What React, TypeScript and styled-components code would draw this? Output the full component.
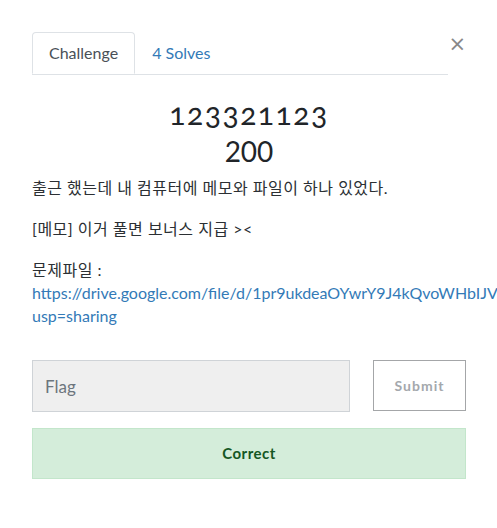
import React from "react";
import styled, { createGlobalStyle } from "styled-components";

const GlobalStyle = createGlobalStyle`
  body {
    margin: 0;
    background: #ffffff;
    font-family: Lato, "Noto Sans CJK KR", sans-serif;
    color: #212529;
    overflow: hidden;
  }
`;

export default function App() {
  return (
    <>
      <GlobalStyle />
      <Modal>
        <Header>
          <Tabs>
            <Tab active>Challenge</Tab>
            <Tab>4 Solves</Tab>
          </Tabs>
          <Close>×</Close>
        </Header>
        <Title>123321123</Title>
        <Points>200</Points>
        <Description>
          <p>출근 했는데 내 컴퓨터에 메모와 파일이 하나 있었다.</p>
          <p>[메모] 이거 풀면 보너스 지급 &gt;&lt;</p>
          <p>
            문제파일 :
            <br />
            <Link>https://drive.google.com/file/d/1pr9ukdeaOYwrY9J4kQvoWHbIJV/view?</Link>
            <br />
            <Link>usp=sharing</Link>
          </p>
        </Description>
        <SubmitRow>
          <FlagInput placeholder="Flag" />
          <SubmitButton>Submit</SubmitButton>
        </SubmitRow>
        <Notice>Correct</Notice>
      </Modal>
    </>
  );
}

const Modal = styled.div`
  padding: 32px 31px 0 32px;
  width: 434px;
`;

const Header = styled.div`
  display: flex;
  align-items: flex-start;
`;

const Tabs = styled.div`
  display: flex;
  width: 420px;
  border-bottom: 1px solid #dee2e6;
`;

const Tab = styled.div<{ active?: boolean }>`
  padding: 0 16px;
  height: 40px;
  line-height: 40px;
  font-size: 16px;
  margin-bottom: ${(p) => (p.active ? "-1px" : "0")};
  color: ${(p) => (p.active ? "#495057" : "#337ab7")};
  background: ${(p) => (p.active ? "#ffffff" : "transparent")};
  border: 1px solid ${(p) => (p.active ? "#dee2e6" : "transparent")};
  border-bottom-color: ${(p) => (p.active ? "#ffffff" : "transparent")};
  border-radius: 4px 4px 0 0;
`;

const Close = styled.div`
  margin-left: auto;
  margin-top: 1px;
  font-size: 21px;
  line-height: 22px;
  color: #888888;
  font-family: "DejaVu Sans", sans-serif;
`;

const Title = styled.h3`
  margin: 21px 0 0;
  text-align: center;
  font-weight: 400;
  font-size: 30px;
  line-height: 35px;
  letter-spacing: 1.5px;
  font-variant-numeric: oldstyle-nums;
  color: #212529;
`;

const Points = styled.h4`
  margin: 3px 0 0;
  text-align: center;
  font-weight: 400;
  font-size: 28px;
  line-height: 34px;
  color: #212529;
`;

const Description = styled.div`
  margin-top: 8px;
  font-size: 16px;
  line-height: 23px;
  letter-spacing: 0.5px;
  white-space: nowrap;
  color: #2b2f33;

  p {
    margin: 0 0 18px;
  }
`;

const Link = styled.span`
  color: #337ab7;
  font-size: 16px;
  letter-spacing: 0;
`;

const SubmitRow = styled.div`
  display: flex;
  align-items: flex-start;
  gap: 23px;
  margin-top: 33px;
`;

const FlagInput = styled.input`
  box-sizing: border-box;
  width: 318px;
  height: 52px;
  padding: 0 12px;
  font-family: Lato, sans-serif;
  font-size: 17px;
  background: #efefef;
  border: 1px solid #cfd3d7;
  outline: none;

  &::placeholder {
    color: #6c757d;
  }
`;

const SubmitButton = styled.button`
  box-sizing: border-box;
  width: 93px;
  height: 51px;
  background: #ffffff;
  border: 1px solid #a4a6a8;
  color: #a4a8ad;
  font-family: Lato, sans-serif;
  font-weight: 700;
  font-size: 14px;
  letter-spacing: 1px;
`;

const Notice = styled.div`
  box-sizing: border-box;
  margin-top: 16px;
  height: 51px;
  line-height: 49px;
  text-align: center;
  background: #d4edda;
  border: 1px solid #c3e6cb;
  color: #155724;
  font-weight: 700;
  font-size: 15px;
  letter-spacing: 0.5px;
`;
